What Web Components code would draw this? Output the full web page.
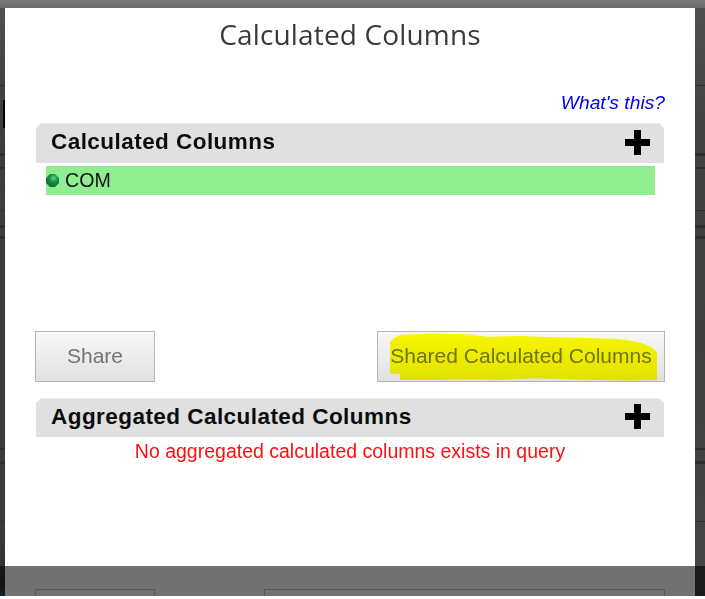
<!DOCTYPE html>
<html><head><meta charset="utf-8">
<style>
html,body{margin:0;padding:0;background:#fff}
body{width:705px;height:599px;overflow:hidden;font-family:"Liberation Sans",Arial,sans-serif}
</style></head><body>
<x-stage>
  <x-dialog heading="Calculated Columns">
    <x-help>What's this?</x-help>
    <x-panel heading="Calculated Columns" style="--h:40px">
      <x-item>COM</x-item>
    </x-panel>
    <x-actions>
      <x-button style="width:120px">Share</x-button>
      <x-button style="width:288px" marked>Shared Calculated Columns</x-button>
    </x-actions>
    <x-panel heading="Aggregated Calculated Columns" style="--h:39px">
      <x-note>No aggregated calculated columns exists in query</x-note>
    </x-panel>
  </x-dialog>
</x-stage>
<script>
function def(name, css, html){
  customElements.define(name, class extends HTMLElement{
    connectedCallback(){
      if(this.shadowRoot) return;
      const r=this.attachShadow({mode:'open'});
      r.innerHTML='<style>'+css+'</style>'+(typeof html==='function'?html(this):html);
    }
  });
}
function bands(list,c){
  return list.map(([y,h])=>`linear-gradient(${c},${c}) 0 ${y}px/100% ${h}px no-repeat`).join(',');
}
const stripes=bands([[77,1],[145,3],[159,2],[202,1],[217,3],[228,3],[440,2],[453,3],[513,1]],'#2e2e2e');
def('x-stage',`
  :host{display:grid;grid-template-columns:5px 690px 10px;grid-template-rows:8px 558px 30px 3px;width:705px;height:599px}
  .top{grid-column:1/4;background:linear-gradient(#7a7a7a,#6c6c6c)}
  .l{background:${stripes},linear-gradient(#505050,#3c3c3c 20%,#3a3a3a 90%,#333);position:relative}
  .l::after{content:"";position:absolute;left:3px;top:92px;width:2px;height:28px;background:#000}
  .r{background:${stripes},linear-gradient(#505050,#424242 20%,#3f3f3f 60%,#454545)}
  .fl{background:linear-gradient(#181818,#141414 70%,#0a2430)}.fr{background:#1c1c1c}
  .mid{background:#717171;position:relative;overflow:hidden}
  .ghost{position:absolute;top:23px;height:20px;border:1px solid #565656;border-bottom:0;box-sizing:border-box}
  .end{grid-column:1/4;background:#fff}
`,`<div class="top"></div><div class="l"></div><slot></slot><div class="r"></div>
   <div class="fl"></div><div class="mid"><div class="ghost" style="left:30px;width:120px"></div><div class="ghost" style="left:259px;width:401px"></div></div><div class="fr"></div><div class="end"></div>`);
def('x-dialog',`
  :host{display:block;background:#fff;box-sizing:border-box;padding:0 30px}
  h1{margin:0;font:400 28px/38px "Open Sans","Noto Sans",sans-serif;color:#3a3a3a;text-align:center;height:76px;padding:7px 0 0;box-sizing:border-box;letter-spacing:.15px}
`,h=>`<h1>${h.getAttribute('heading')}</h1><slot></slot>`);
def('x-help',`
  :host{display:block;text-align:right;font:italic 19.25px/24px "Liberation Sans",sans-serif;color:#0000ee;height:39px;padding-top:7px;box-sizing:border-box}
`,`<slot></slot>`);
def('x-panel',`
  :host{display:block;margin:0 1px}
  .head{display:flex;align-items:center;justify-content:space-between;height:var(--h,40px);background:#e0e0e0;border-top:1px solid #ececec;padding:0 14px 0 15px;box-sizing:border-box;clip-path:polygon(5px 0,calc(100% - 5px) 0,100% 5px,100% 100%,0 100%,0 5px)}
  .t{font:700 22.5px/26px "Liberation Sans",sans-serif;color:#0c0c0c;letter-spacing:.45px;margin-top:-3px}
  svg{display:block;width:25px;height:25px;margin-bottom:3px}
`,h=>`<div class="head"><span class="t">${h.getAttribute('heading')}</span><svg viewBox="0 0 25 25"><path d="M9 0h7v9h9v7h-9v9H9v-9H0V9h9z" fill="#000"/></svg></div><slot></slot>`);
def('x-item',`
  :host{display:flex;align-items:center;box-sizing:border-box;height:29px;padding-bottom:2px;margin:3px 9px 0 10px;background:#90ee90;font:19.6px/24px "Liberation Sans",sans-serif;color:#141414;gap:6px}
  svg{display:block;width:13px;height:13px;flex:none;margin-top:2px}
`,`<svg viewBox="0 0 13 13"><defs><radialGradient id="g" cx=".58" cy=".32" r=".72"><stop offset="0" stop-color="#6fcf90"/><stop offset=".45" stop-color="#129040"/><stop offset="1" stop-color="#0a6b2c"/></radialGradient></defs><path d="M4 0h5l4 4v5l-4 4H4L0 9V4z" fill="url(#g)"/></svg><span><slot></slot></span>`);
def('x-actions',`
  :host{display:flex;justify-content:space-between;margin-top:136px;margin-bottom:16px}
`,`<slot></slot>`);
def('x-button',`
  :host{display:block;height:51px;box-sizing:border-box;border:1px solid #b5b5b5;background:linear-gradient(#f8f8f8,#e0e0e0);position:relative}
  .b{display:flex;height:100%;box-sizing:border-box;padding-bottom:2px;align-items:center;justify-content:center;font:21px/24px "Liberation Sans",sans-serif;color:#737373}
  svg{position:absolute;left:12px;top:1px;width:268px;height:49px;mix-blend-mode:multiply}
`,h=>`<div class="b"><slot></slot></div>`+(h.hasAttribute('marked')?`<svg viewBox="0 0 268 49" preserveAspectRatio="none"><path d="M0 8.7L4 5 10 2 26 1 42 .3 60 1 78 1.3 98 3.7 130 3 165 4.3 200 5 228 6 242 8 252 10.3 261 14 267 18.7 267 47 240 47.5 205 47 175 46 142 45.3 110 47 82 46.3 45 47 10 47 10 41 0 40.3z" fill="#ff0"/></svg>`:''));
def('x-note',`
  :host{display:block;text-align:center;font:19.5px/24px "Liberation Sans",sans-serif;color:#ff1010;margin-top:2px}
`,`<slot></slot>`);
</script>
</body></html>
